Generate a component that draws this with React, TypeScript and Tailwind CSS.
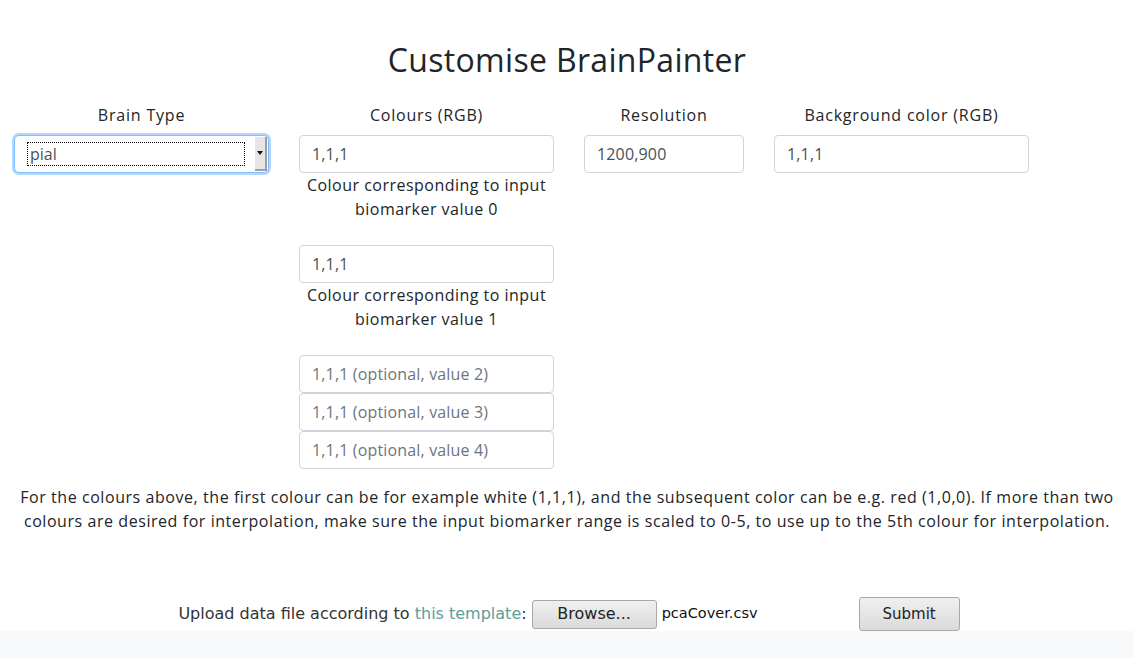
import React from 'react';

const sans = "font-['Open_Sans','Noto_Sans',sans-serif]";

const TextBox = ({ value, placeholder, w = 'w-[255px]' }: { value?: string; placeholder?: string; w?: string }) => (
  <input
    type="text"
    defaultValue={value}
    placeholder={placeholder}
    className={`${w} h-[38px] px-3 border border-[#ced4da] rounded-[4px] bg-white text-[16px] text-[#495057] placeholder:text-[#6c757d] tracking-[0.01em] outline-none`}
  />
);

const Label = ({ children }: { children: React.ReactNode }) => (
  <div className="text-[16px] leading-6 text-[#212529] tracking-[0.05em] text-center mb-2">{children}</div>
);

const Hint = ({ children }: { children: React.ReactNode }) => (
  <p className="w-[255px] text-center text-[16px] leading-6 text-[#212529] tracking-[0.03em] mb-6">{children}</p>
);

const App: React.FC = () => {
  return (
    <div className={`min-h-screen bg-[#f8f9fa] ${sans}`}>
      <main className="bg-white pt-[41px]">
        <h1 className="text-center text-[32px] leading-[38px] text-[#212529] tracking-[0.01em]">Customise BrainPainter</h1>

        <div className="flex gap-[30px] pl-[14px] mt-6">
          {/* Brain Type */}
          <div className="w-[255px]">
            <Label>Brain Type</Label>
            <div className="relative h-[38px] rounded-[5px] border border-[#80bdff] shadow-[0_0_0_2px_#b3d7ff] bg-white flex items-center">
              <div className="ml-[12px] w-[218px] h-[24px] border border-dotted border-black flex items-center pl-[2px] text-[16px] text-[#495057]">
                pial
              </div>
              <div className="absolute right-[1px] top-[1px] bottom-[1px] w-[12px] bg-[#e6e6e6] border-r-2 border-b-2 border-[#a0a0a0] flex items-center justify-center">
                <svg width="6" height="4" viewBox="0 0 6 4"><path d="M0 0h6L3 4z" fill="#111" /></svg>
              </div>
            </div>
          </div>

          {/* Colours */}
          <div className="w-[255px]">
            <Label>Colours (RGB)</Label>
            <TextBox value="1,1,1" />
            <Hint>Colour corresponding to input biomarker value 0</Hint>
            <TextBox value="1,1,1" />
            <Hint>Colour corresponding to input biomarker value 1</Hint>
            <div className="flex flex-col">
              <TextBox placeholder="1,1,1 (optional, value 2)" />
              <TextBox placeholder="1,1,1 (optional, value 3)" />
              <TextBox placeholder="1,1,1 (optional, value 4)" />
            </div>
          </div>

          {/* Resolution */}
          <div className="w-[160px]">
            <Label>Resolution</Label>
            <TextBox value="1200,900" w="w-[160px]" />
          </div>

          {/* Background */}
          <div className="w-[255px]">
            <Label>Background color (RGB)</Label>
            <TextBox value="1,1,1" />
          </div>
        </div>

        <p className="mt-4 px-2 text-center text-[16px] leading-6 text-[#212529] tracking-[0.035em]">
          For the colours above, the first colour can be for example white (1,1,1), and the subsequent color can be e.g. red (1,0,0). If more than two colours are desired for interpolation, make sure the input biomarker range is scaled to 0-5, to use up to the 5th colour for interpolation.
        </p>

        <div className="mt-16 flex justify-center items-center h-[34px] font-['DejaVu_Sans',sans-serif] text-[16px] text-[#333]">
          <span className="ml-[4px]">
            Upload data file according to <a href="#" className="text-[#5b9e99]">this template</a>:
          </span>
          <button className="ml-[5px] w-[125px] h-[29px] rounded-[3px] border border-[#a8a8a8] bg-gradient-to-b from-[#f0f0f0] to-[#dadada] text-[16px] text-[#222]">
            Browse...
          </button>
          <span className="ml-[5px] w-[197px] text-[14.5px] text-[#111]">pcaCover.csv</span>
          <button className="w-[101px] h-[34px] rounded-[3px] border border-[#a8a8a8] bg-gradient-to-b from-[#f0f0f0] to-[#dadada] text-[15px] text-[#222]">
            Submit
          </button>
        </div>
      </main>
    </div>
  );
};

export default App;
